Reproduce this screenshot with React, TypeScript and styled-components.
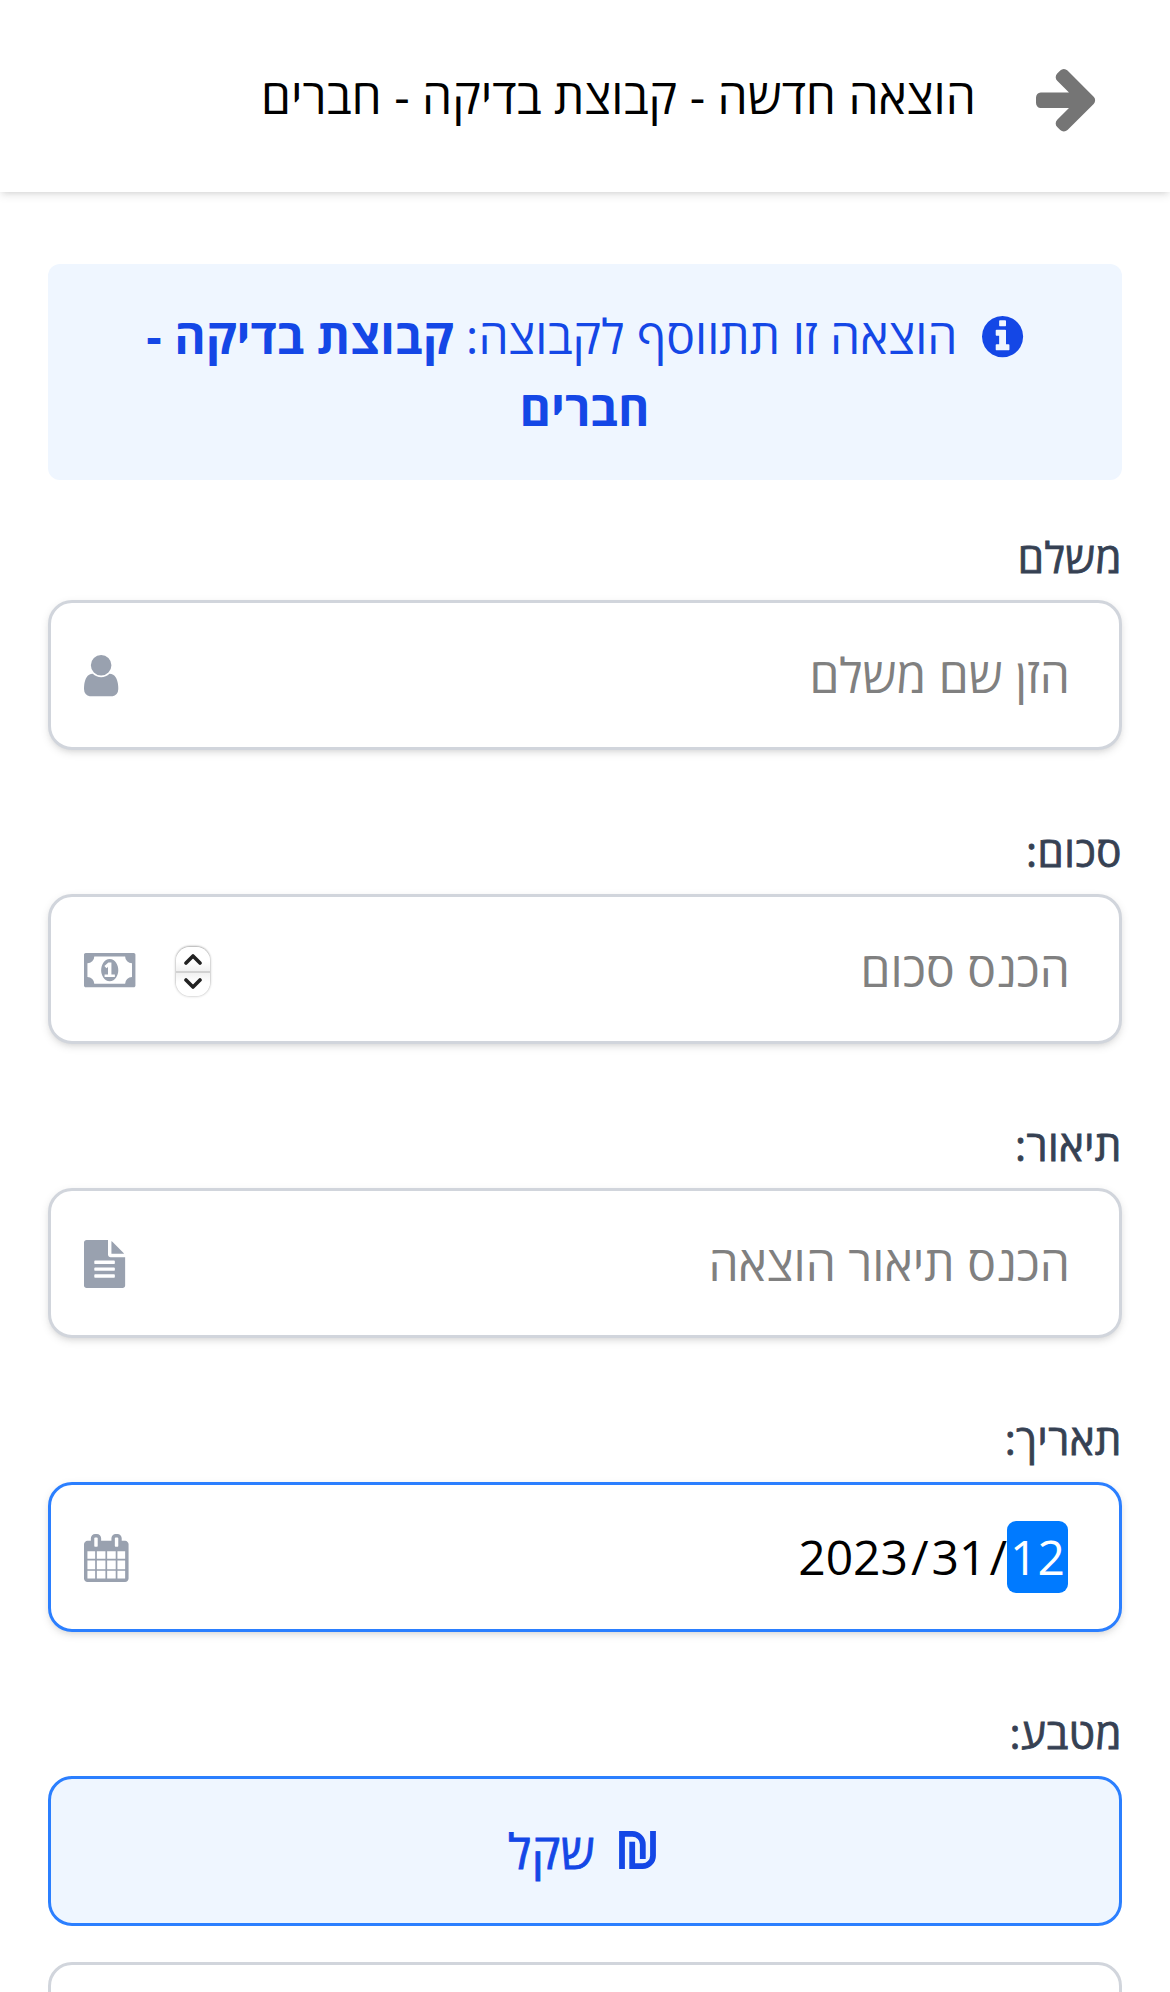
import React from "react";
import styled, { createGlobalStyle, css } from "styled-components";

const FONT = '"Open Sans", "Noto Sans", sans-serif';

const GlobalStyle = createGlobalStyle`
  *, *::before, *::after { box-sizing: border-box; }
  html, body { margin: 0; background: #fff; }
  body { font-family: ${FONT}; height: 1992px; overflow: hidden; color: #000; }
`;

const softShadow = css`
  box-shadow: 0 3px 9px rgba(0, 0, 0, 0.1), 0 3px 6px -3px rgba(0, 0, 0, 0.1);
`;

// Hebrew glyphs have no medium cut, so the weight is built from the regular one
const mediumWeight = css`
  font-weight: 400;
  -webkit-text-stroke: 0.8px currentColor;
  letter-spacing: 0.5px;
`;

const Page = styled.div`
  direction: rtl;
  height: 1992px;
  overflow: hidden;
`;

const Header = styled.header`
  display: flex;
  align-items: center;
  height: 192px;
  padding: 0 75px 0 48px;
  background: #fff;
  ${softShadow}
`;

const BackButton = styled.button`
  display: flex;
  padding: 8px 0 0;
  border: 0;
  background: none;
  color: #757575;
`;

const Title = styled.h1`
  margin: 0 60px 0 0;
  font-size: 48px;
  font-weight: 400;
  line-height: 72px;
  white-space: nowrap;
`;

const Form = styled.form`
  display: flex;
  flex-direction: column;
  padding: 72px 48px 0;
`;

const Notice = styled.div`
  height: 216px;
  margin-bottom: 48px;
  padding: 36px 37px 36px 36px;
  border-radius: 12px;
  background: #eff6ff;
  color: #1447e6;
  font-size: 48px;
  line-height: 72px;
  text-align: center;
`;

const NoticeIcon = styled.span`
  display: inline-block;
  margin-left: 24px;
  line-height: 0;
  vertical-align: -3px;
`;

const Field = styled.div`
  display: flex;
  flex-direction: column;
  gap: 12px;
  margin-bottom: 72px;
`;

const Label = styled.label`
  height: 60px;
  color: #364153;
  font-size: 42px;
  line-height: 58px;
  ${mediumWeight}
`;

const Control = styled.div<{ $active?: boolean }>`
  display: flex;
  align-items: center;
  height: 150px;
  padding: 0 49px 0 33px;
  border: 3px solid ${(p) => (p.$active ? "#2b7fff" : "#d1d5dc")};
  border-radius: 24px;
  background: #fff;
  ${softShadow}
`;

const TextInput = styled.input`
  flex: 1;
  min-width: 0;
  height: 72px;
  padding: 0;
  border: 0;
  outline: 0;
  background: transparent;
  font: 400 48px/72px ${FONT};
  direction: rtl;
  &::placeholder { color: #808080; opacity: 1; }
`;

const FieldIcon = styled.span`
  display: flex;
  padding-top: 2px;
  color: #99a1af;
`;

const DateValue = styled.div`
  display: flex;
  flex: 1;
  align-items: center;
  padding-right: 2px;
  font-size: 48px;
  line-height: 72px;
`;

const DatePart = styled.span<{ $selected?: boolean }>`
  padding: 0 3px;
  border-radius: 9px;
  background: ${(p) => (p.$selected ? "#007aff" : "transparent")};
  color: ${(p) => (p.$selected ? "#fff" : "#000")};
`;

const Stepper = styled.span`
  display: flex;
  flex-direction: column;
  width: 34px;
  height: 49px;
  margin: 5px 0 0 41px;
  border-radius: 14px;
  background: #fff;
  box-shadow: 0 0 3px rgba(0, 0, 0, 0.3), 0 -1px 2px rgba(0, 0, 0, 0.2);
`;

const StepHalf = styled.span<{ $up?: boolean }>`
  display: flex;
  flex: 1;
  align-items: center;
  justify-content: center;
  border-bottom: ${(p) => (p.$up ? "2px solid #d2d2d2" : "0")};
  border-radius: ${(p) => (p.$up ? "14px 14px 0 0" : "0 0 14px 14px")};
  background: ${(p) =>
    p.$up
      ? "linear-gradient(#fff 60%, #f1f1f1)"
      : "linear-gradient(#f1f1f1, #fff 40%)"};
`;

const Options = styled.div`
  display: flex;
  flex-direction: column;
  gap: 36px;
`;

const Option = styled.button<{ $active?: boolean }>`
  display: flex;
  align-items: center;
  justify-content: center;
  gap: 24px;
  height: 150px;
  padding: 0 6px 0 0;
  border: 3px solid ${(p) => (p.$active ? "#2b7fff" : "#d1d5dc")};
  border-radius: 24px;
  background: ${(p) => (p.$active ? "#eff6ff" : "#fff")};
  color: ${(p) => (p.$active ? "#1447e6" : "#364153")};
  font: 400 48px/72px ${FONT};
  ${mediumWeight}

  svg { margin-bottom: 2px; }
`;

type GlyphProps = { box: [number, number, number, number]; size: number; d: string };

// size is the font size the glyph is set at; 1792 units make one em
const Glyph = ({ box, size, d }: GlyphProps) => (
  <svg
    viewBox={box.join(" ")}
    width={(box[2] * size) / 1792}
    height={(box[3] * size) / 1792}
    fill="currentColor"
    overflow="visible"
  >
    <path d={d} />
  </svg>
);

const ARROW =
  "M1600 960q0 54-37 91l-651 651q-39 37-91 37-51 0-90-37l-75-75q-38-38-38-91t38-91l293-293h-704q-52 0-84.5-37.5t-32.5-90.5v-128q0-53 32.5-90.5t84.5-37.5h704l-293-294q-38-36-38-90t38-90l75-75q38-38 90-38 53 0 91 38l651 651q37 35 37 90z";
const INFO =
  "M1152 1376v-160q0-14-9-23t-23-9h-96v-512q0-14-9-23t-23-9h-320q-14 0-23 9t-9 23v160q0 14 9 23t23 9h96v320h-96q-14 0-23 9t-9 23v160q0 14 9 23t23 9h448q14 0 23-9t9-23zm-128-896v-160q0-14-9-23t-23-9h-192q-14 0-23 9t-9 23v160q0 14 9 23t23 9h192q14 0 23-9t9-23zm640 416q0 209-103 385.5t-279.5 279.5-385.5 103-385.5-103-279.5-279.5-103-385.5 103-385.5 279.5-279.5 385.5-103 385.5 103 279.5 279.5 103 385.5z";
const USER =
  "M1536 1399q0 109-62.5 187t-150.5 78h-854q-88 0-150.5-78t-62.5-187q0-85 8.5-160.5t31.5-152 58.5-131 94-89 134.5-34.5q131 128 313 128t313-128q76 0 134.5 34.5t94 89 58.5 131 31.5 152 8.5 160.5zm-256-887q0 159-112.5 271.5t-271.5 112.5-271.5-112.5-112.5-271.5 112.5-271.5 271.5-112.5 271.5 112.5 112.5 271.5z";
const MONEY =
  "M704 1152h384v-96h-128v-448h-114l-148 137 77 80q42-37 55-57h2v288h-128v96zm512-256q0 70-21 142t-59.5 134-101.5 101-138 39-138-39-101.5-101-59.5-134-21-142 21-142 59.5-134 101.5-101 138-39 138 39 101.5 101 59.5 134 21 142zm512 256v-512q-106 0-181-75t-75-181h-1152q0 106-75 181t-181 75v512q106 0 181 75t75 181h1152q0-106 75-181t181-75zm128-832v1152q0 26-19 45t-45 19h-1792q-26 0-45-19t-19-45v-1152q0-26 19-45t45-19h1792q26 0 45 19t19 45z";
const FILE =
  "M1596 476q14 14 28 36h-472v-472q22 14 36 28zm-476 164h544v1056q0 40-28 68t-68 28h-1344q-40 0-68-28t-28-68v-1600q0-40 28-68t68-28h800v544q0 40 28 68t68 28zm160 736v-64q0-14-9-23t-23-9h-704q-14 0-23 9t-9 23v64q0 14 9 23t23 9h704q14 0 23-9t9-23zm0-256v-64q0-14-9-23t-23-9h-704q-14 0-23 9t-9 23v64q0 14 9 23t23 9h704q14 0 23-9t9-23zm0-256v-64q0-14-9-23t-23-9h-704q-14 0-23 9t-9 23v64q0 14 9 23t23 9h704q14 0 23-9t9-23z";
const CALENDAR =
  "M192 1664h288v-288h-288v288zm352 0h320v-288h-320v288zm-352-352h288v-320h-288v320zm352 0h320v-320h-320v320zm-352-384h288v-288h-288v288zm736 736h320v-288h-320v288zm-384-736h320v-288h-320v288zm768 736h288v-288h-288v288zm-384-352h320v-320h-320v320zm-352-864v-288q0-13-9.5-22.5t-22.5-9.5h-64q-13 0-22.5 9.5t-9.5 22.5v288q0 13 9.5 22.5t22.5 9.5h64q13 0 22.5-9.5t9.5-22.5zm736 864h288v-320h-288v320zm-384-384h320v-288h-320v288zm384 0h288v-288h-288v288zm32-480v-288q0-13-9.5-22.5t-22.5-9.5h-64q-13 0-22.5 9.5t-9.5 22.5v288q0 13 9.5 22.5t22.5 9.5h64q13 0 22.5-9.5t9.5-22.5zm384-64v1280q0 52-38 90t-90 38h-1408q-52 0-90-38t-38-90v-1280q0-52 38-90t90-38h128v-96q0-66 47-113t113-47h64q66 0 113 47t47 113v96h384v-96q0-66 47-113t113-47h64q66 0 113 47t47 113v96h128q52 0 90 38t38 90z";

const ShekelIcon = () => (
  <svg width="37" height="38" viewBox="0 0 37 38" fill="none" stroke="currentColor" strokeWidth="5.8">
    <path d="M3 38V2.900H13.400A10.400 10.400 0 0 1 23.800 13.300V28" />
    <path d="M13.200 10.700V35.100H23.600A10.400 10.400 0 0 0 34 24.700V0" />
  </svg>
);

const Chevron = ({ up }: { up?: boolean }) => (
  <svg width="18" height="12" viewBox="0 0 18 12" fill="none" stroke="#222" strokeWidth="3.6" strokeLinecap="round" strokeLinejoin="round">
    <path d={up ? "M2 10L9 3L16 10" : "M2 2L9 9L16 2"} />
  </svg>
);

export default function App() {
  return (
    <>
      <GlobalStyle />
      <Page>
        <Header>
          <BackButton type="button">
            <Glyph box={[128, 181, 1472, 1558]} size={72} d={ARROW} />
          </BackButton>
          <Title>הוצאה חדשה - קבוצת בדיקה - חברים</Title>
        </Header>
        <Form>
          <Notice>
            <NoticeIcon>
              <Glyph box={[128, 128, 1536, 1536]} size={48} d={INFO} />
            </NoticeIcon>
            הוצאה זו תתווסף לקבוצה: <strong>קבוצת בדיקה -</strong> <strong>חברים</strong>
          </Notice>
          <Field>
            <Label>משלם</Label>
            <Control>
              <TextInput placeholder="הזן שם משלם" />
              <FieldIcon>
                <Glyph box={[256, 128, 1280, 1536]} size={48} d={USER} />
              </FieldIcon>
            </Control>
          </Field>
          <Field>
            <Label>סכום:</Label>
            <Control>
              <TextInput placeholder="הכנס סכום" />
              <Stepper>
                <StepHalf $up>
                  <Chevron up />
                </StepHalf>
                <StepHalf>
                  <Chevron />
                </StepHalf>
              </Stepper>
              <FieldIcon>
                <Glyph box={[-64, 256, 1920, 1280]} size={48} d={MONEY} />
              </FieldIcon>
            </Control>
          </Field>
          <Field>
            <Label>תיאור:</Label>
            <Control>
              <TextInput placeholder="הכנס תיאור הוצאה" />
              <FieldIcon>
                <Glyph box={[128, 0, 1536, 1792]} size={48} d={FILE} />
              </FieldIcon>
            </Control>
          </Field>
          <Field>
            <Label>תאריך:</Label>
            <Control $active>
              <DateValue>
                <DatePart $selected>12</DatePart>/<DatePart>31</DatePart>/<DatePart>2023</DatePart>
              </DateValue>
              <FieldIcon>
                <Glyph box={[64, 0, 1664, 1792]} size={48} d={CALENDAR} />
              </FieldIcon>
            </Control>
          </Field>
          <Field>
            <Label>מטבע:</Label>
            <Options>
              <Option type="button" $active>
                <ShekelIcon />
                שקל
              </Option>
              <Option type="button" />
            </Options>
          </Field>
        </Form>
      </Page>
    </>
  );
}
